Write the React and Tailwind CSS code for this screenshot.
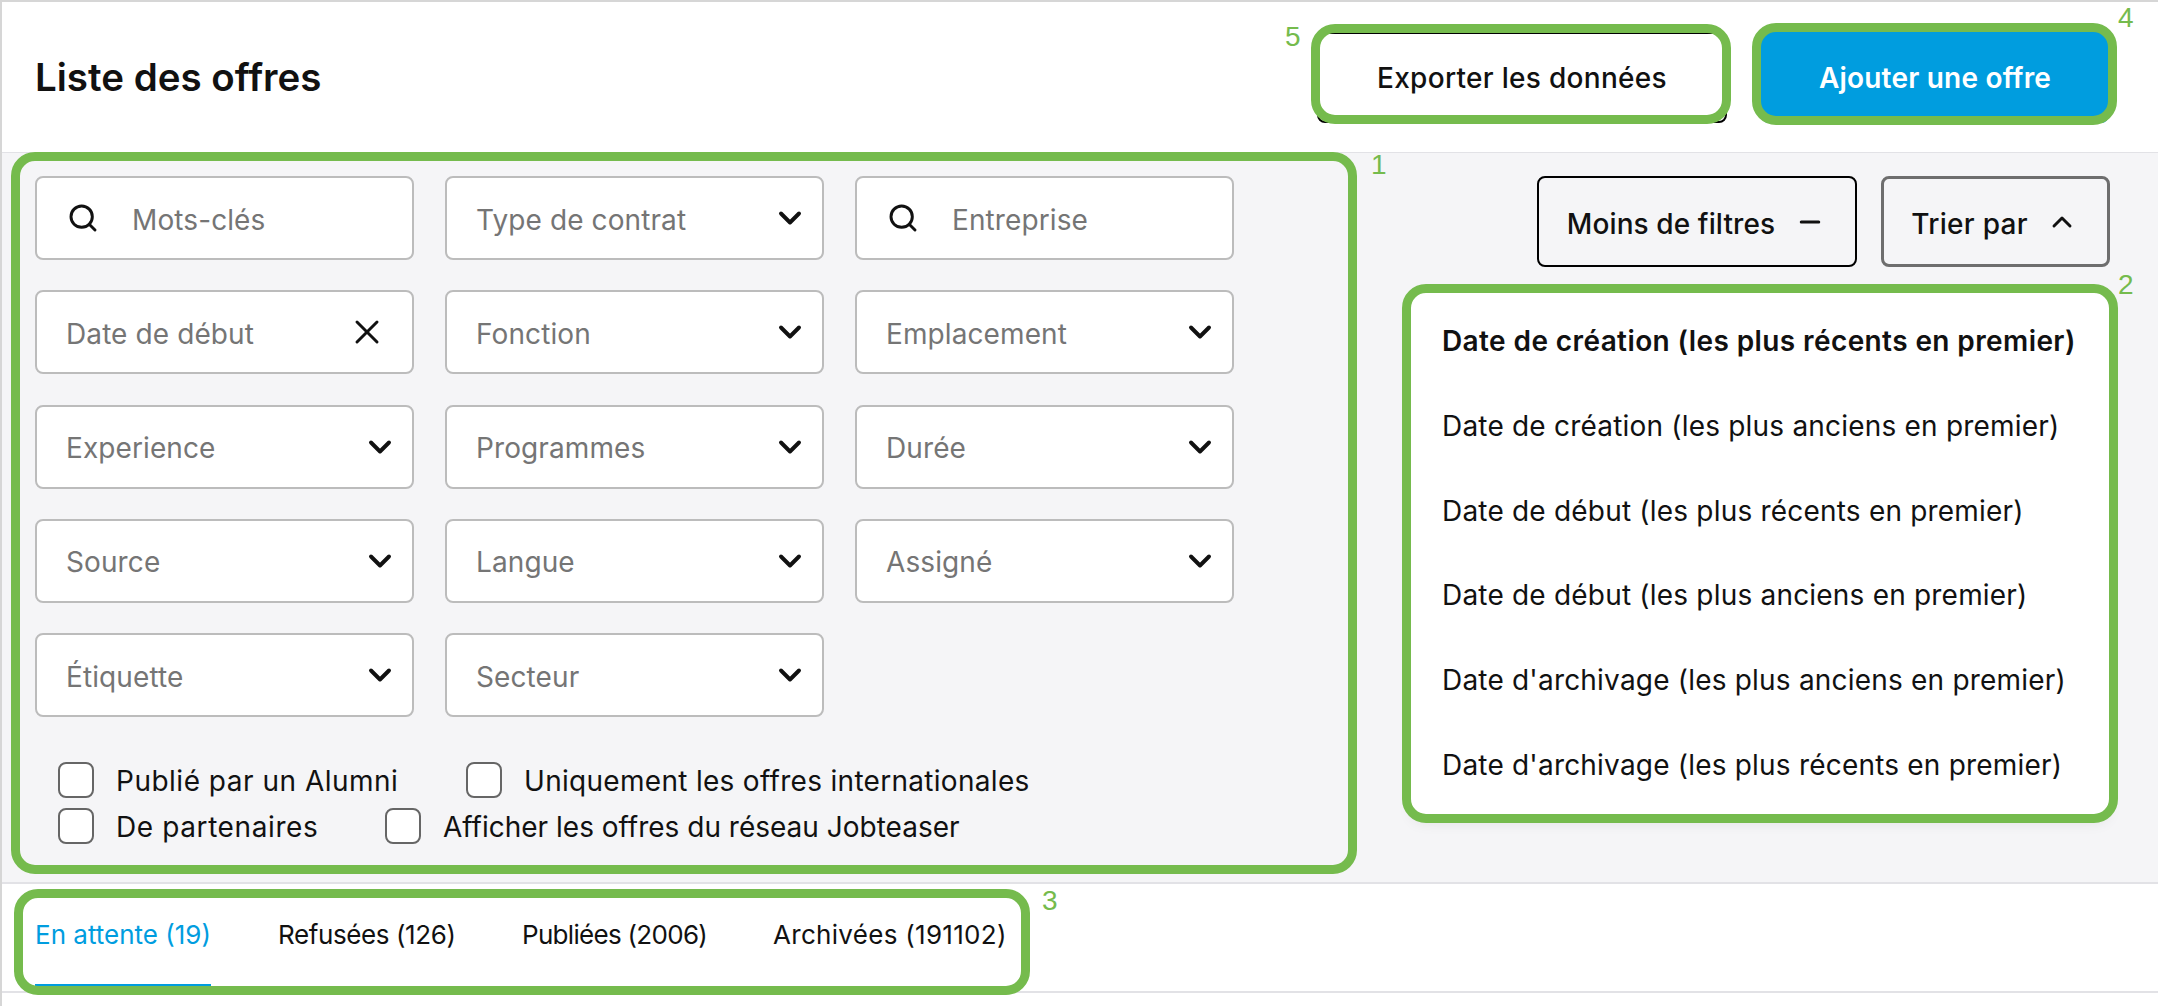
import { ChevronDown, ChevronUp, Minus, Search, X } from 'lucide-react'

const sortOptions = [
  'Date de création (les plus anciens en premier)',
  'Date de début (les plus récents en premier)',
  'Date de début (les plus anciens en premier)',
  "Date d'archivage (les plus anciens en premier)",
  "Date d'archivage (les plus récents en premier)",
]

function Select({ label }) {
  return (
    <div className="h-[84px] bg-white border-2 border-[#bcbcbc] rounded-lg flex items-center justify-between pl-[29px] pr-[14px] text-[28px] tracking-[0.1px] text-[#757575]">
      <span className="pt-[3px]">{label}</span>
      <ChevronDown size={36} strokeWidth={2.6} className="text-[#111]" />
    </div>
  )
}

function SearchInput({ label }) {
  return (
    <div className="h-[84px] bg-white border-2 border-[#bcbcbc] rounded-lg flex items-center pl-[30px] text-[28px] tracking-[0.1px] text-[#757575]">
      <Search size={32} strokeWidth={2.2} className="text-[#111]" />
      <span className="ml-[33px] pt-[3px]">{label}</span>
    </div>
  )
}

function Check({ label, className }) {
  return (
    <label className={`h-9 flex items-center text-[28px] text-[#111] ${className}`}>
      <span className="w-9 h-9 border-2 border-[#666] rounded-lg mr-[22px] bg-white"></span>
      <span className="pt-[2px] leading-[32px]">{label}</span>
    </label>
  )
}

export default function App() {
  return (
    <div className="relative min-h-screen overflow-hidden bg-white border-t-2 border-l-2 border-[#d6d6d6] text-[#111] font-['Inter',sans-serif]">
      <header className="h-[151px] flex items-center justify-between pl-[33px] pr-[49px] border-b border-[#e2e2e6]">
        <h1 className="pt-[2px] text-[38.5px] font-semibold">Liste des offres</h1>
        <div className="flex gap-[34px]">
          <button className="w-[410px] h-[91px] pt-[2px] border-2 border-black rounded-lg bg-white text-[28px] font-medium tracking-[0.3px]">Exporter les données</button>
          <button className="w-[348px] h-[91px] pt-[2px] rounded-lg bg-[#009ddf] text-white text-[28px] font-semibold tracking-[0.2px]">Ajouter une offre</button>
        </div>
      </header>

      <section className="h-[731px] flex justify-between bg-[#f5f5f7] border-b-2 border-[#e2e2e6] pl-[33px] pr-[48px]">
        <div className="pt-[23px]">
          <div className="grid grid-cols-[379px_379px_379px] gap-x-[31px] gap-y-[30.25px]">
            <SearchInput label="Mots-clés" />
            <Select label="Type de contrat" />
            <SearchInput label="Entreprise" />
            <div className="h-[84px] bg-white border-2 border-[#bcbcbc] rounded-lg flex items-center justify-between pl-[29px] pr-[25px] text-[28px] tracking-[0.1px] text-[#757575]">
              <span className="pt-[3px]">Date de début</span>
              <X size={40} strokeWidth={1.8} className="text-[#111]" />
            </div>
            <Select label="Fonction" />
            <Select label="Emplacement" />
            <Select label="Experience" />
            <Select label="Programmes" />
            <Select label="Durée" />
            <Select label="Source" />
            <Select label="Langue" />
            <Select label="Assigné" />
            <Select label="Étiquette" />
            <Select label="Secteur" />
          </div>
          <div className="mt-[45px] pl-[23px] flex flex-col gap-[10px]">
            <div className="flex">
              <Check label="Publié par un Alumni" className="w-[408px] tracking-[0.5px]" />
              <Check label="Uniquement les offres internationales" className="tracking-[0.3px]" />
            </div>
            <div className="flex">
              <Check label="De partenaires" className="w-[327px] tracking-[0.6px]" />
              <Check label="Afficher les offres du réseau Jobteaser" />
            </div>
          </div>
        </div>

        <div className="pt-[23px] flex flex-col items-end">
          <div className="flex gap-[24px]">
            <button className="w-[320px] h-[91px] border-2 border-black rounded-lg flex items-center justify-center gap-[20px] pr-[2px] text-[28px] font-medium tracking-[0.1px]">
              <span className="pt-[4px]">Moins de filtres</span>
              <Minus size={30} strokeWidth={2.4} />
            </button>
            <button className="w-[229px] h-[91px] border-[3px] border-[#6e6e6e] rounded-lg flex items-center justify-center gap-[18px] pr-[2px] text-[28px] font-medium tracking-[0.3px]">
              <span className="pt-[4px]">Trier par</span>
              <ChevronUp size={32} strokeWidth={2.2} />
            </button>
          </div>
          <div className="mt-[22px] w-[700px] h-[525px] bg-white rounded-xl shadow-lg pt-[10px] pl-[32px] text-[28px] tracking-[0.2px]">
            <div className="h-[84.7px] flex items-center font-semibold tracking-[0.4px]">Date de création (les plus récents en premier)</div>
            {sortOptions.map((option) => (
              <div key={option} className="h-[84.7px] flex items-center">{option}</div>
            ))}
          </div>
        </div>
      </section>

      <nav className="h-[109px] flex gap-[67px] pl-[33px] border-b-2 border-[#e2e2e6] text-[26px] whitespace-nowrap">
        <div className="w-[176px] h-[105px] pt-[31px] border-b-[5px] border-[#009ddf] text-[#009ddf]">En attente (19)</div>
        <div className="w-[177px] pt-[31px] tracking-[-0.4px]">Refusées (126)</div>
        <div className="w-[184px] pt-[31px] tracking-[-0.7px]">Publiées (2006)</div>
        <div className="pt-[31px] tracking-[0.3px]">Archivées (191102)</div>
      </nav>

      {/* annotations posees sur la capture */}
      <div className="absolute left-[9px] top-[150px] w-[1346px] h-[722px] border-[9px] border-[#75bb4d] rounded-[24px]"></div>
      <div className="absolute left-[1400px] top-[282px] w-[716px] h-[539px] border-[9px] border-[#75bb4d] rounded-[24px]"></div>
      <div className="absolute left-[12px] top-[887px] w-[1016px] h-[106px] border-[9px] border-[#75bb4d] rounded-[24px]"></div>
      <div className="absolute left-[1750px] top-[21px] w-[365px] h-[102px] border-[9px] border-[#75bb4d] rounded-[24px]"></div>
      <div className="absolute left-[1309px] top-[22px] w-[420px] h-[100px] border-[9px] border-[#75bb4d] rounded-[24px]"></div>
      <span className="absolute left-[1369px] top-[149px] text-[28px] leading-none text-[#75bb4d] font-['Liberation_Sans',sans-serif]">1</span>
      <span className="absolute left-[2116px] top-[269px] text-[28px] leading-none text-[#75bb4d] font-['Liberation_Sans',sans-serif]">2</span>
      <span className="absolute left-[1040px] top-[885px] text-[28px] leading-none text-[#75bb4d] font-['Liberation_Sans',sans-serif]">3</span>
      <span className="absolute left-[2116px] top-[2px] text-[28px] leading-none text-[#75bb4d] font-['Liberation_Sans',sans-serif]">4</span>
      <span className="absolute left-[1283px] top-[21px] text-[28px] leading-none text-[#75bb4d] font-['Liberation_Sans',sans-serif]">5</span>
    </div>
  )
}
